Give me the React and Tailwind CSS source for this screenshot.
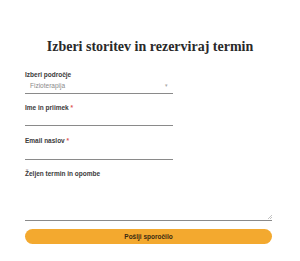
export default function App() {
  return (
    <div className="w-[300px] h-[261px] bg-white flex flex-col" style={{ fontFamily: '"Liberation Sans", Arial, sans-serif' }}>
      <h1
        className="mt-[38px] text-center text-[14px] font-bold text-[#2a2a2a] leading-[18px]"
        style={{ fontFamily: '"Liberation Serif", "DejaVu Serif", serif' }}
      >
        Izberi storitev in rezerviraj termin
      </h1>
      <form className="mx-[25px] mt-[15px] flex flex-col">
        <label className="text-[6.5px] font-bold text-[#3a3a3a] leading-[8px]">Izberi področje</label>
        <div className="w-[148px] h-[15px] border-b border-[#8a8a8a] flex items-center justify-between pl-[5px] pr-[5px]">
          <span className="text-[6.5px] text-[#8a8a8a]">Fizioterapija</span>
          <span className="text-[5px] text-[#aaa]">▾</span>
        </div>
        <label className="mt-[10px] text-[6.5px] font-bold text-[#3a3a3a] leading-[8px]">
          Ime in priimek <span className="text-[#e05555]">*</span>
        </label>
        <div className="w-[148px] h-[14px] border-b border-[#8a8a8a]" />
        <label className="mt-[11px] text-[6.5px] font-bold text-[#3a3a3a] leading-[8px]">
          Email naslov <span className="text-[#e05555]">*</span>
        </label>
        <div className="w-[148px] h-[15px] border-b border-[#8a8a8a]" />
        <label className="mt-[10px] text-[6.5px] font-bold text-[#3a3a3a] leading-[8px]">Željen termin in opombe</label>
        <div className="relative w-[247px] h-[43px] border-b border-[#8a8a8a]">
          <svg className="absolute right-0 bottom-[1px]" width="5" height="5" viewBox="0 0 5 5">
            <path d="M5 1 L1 5 M5 3 L3 5" stroke="#aaa" strokeWidth="0.7" />
          </svg>
        </div>
        <button
          type="button"
          className="mt-[8px] w-[247px] h-[15px] rounded-full bg-[#f3a92f] text-[6.5px] font-bold text-[#3a2a10] flex items-center justify-center"
        >
          Pošlji sporočilo
        </button>
      </form>
    </div>
  );
}
